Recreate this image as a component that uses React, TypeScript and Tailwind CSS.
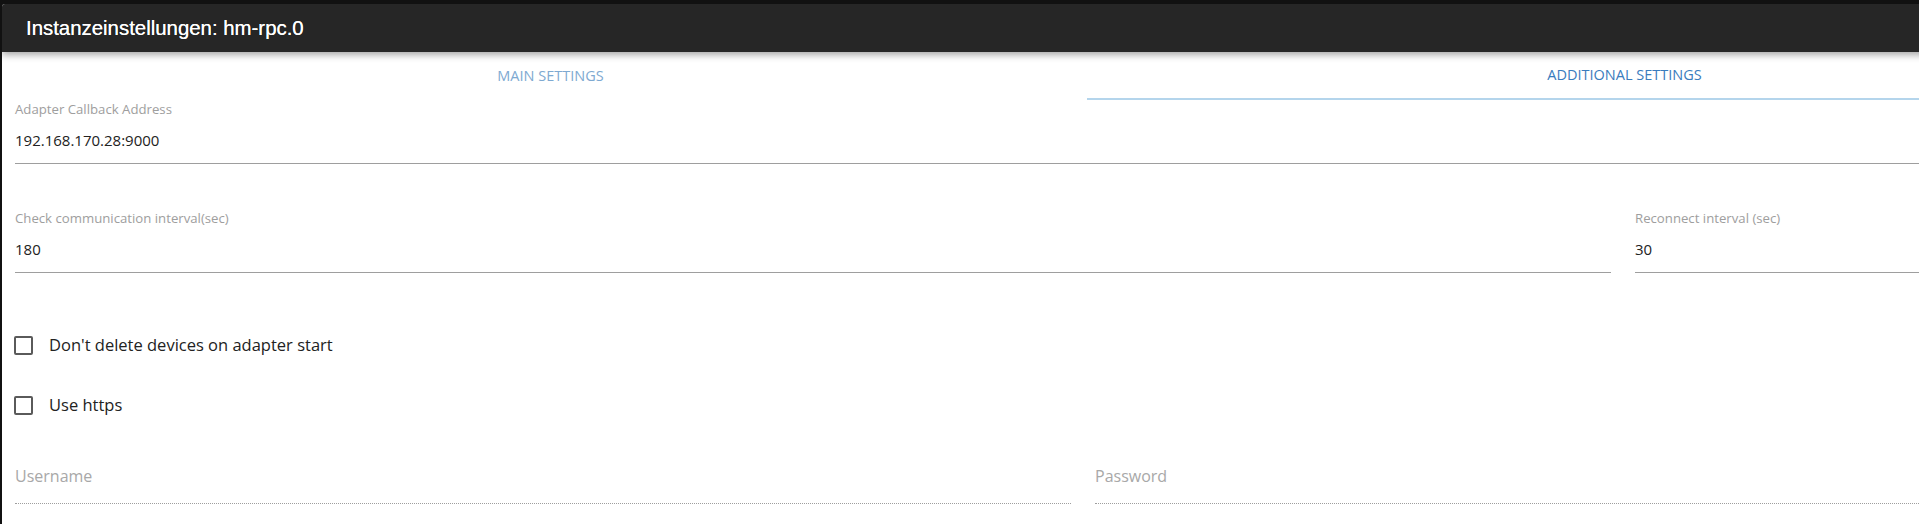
import React from 'react';

const body = { fontFamily: '"Open Sans", "Noto Sans", sans-serif' };

const TextField = ({ label, value }: { label: string; value: string }) => (
  <div className="px-3">
    <div className="h-[17px] text-[13.2px] leading-[17px] text-[#9e9e9e]">{label}</div>
    <div className="h-[46px] flex items-center pb-[1px] border-b border-[#9e9e9e] text-[15px] text-[#222]">{value}</div>
  </div>
);

const Placeholder = ({ text }: { text: string }) => (
  <div className="px-3">
    <div className="h-[46px] flex items-center pb-[9px] border-b border-dotted border-[#9e9e9e] text-[16px] text-[#a8a8a8]">
      {text}
    </div>
  </div>
);

const Checkbox = ({ label, className }: { label: string; className: string }) => (
  <div className={`flex items-center h-[24px] pl-[11px] ${className}`}>
    <span className="w-[19px] h-[19px] border-2 border-[#5a5a5a] rounded-[2px]" />
    <span className="ml-[16px] text-[16.5px] text-[#222]">{label}</span>
  </div>
);

export default function App() {
  return (
    <div className="w-[1919px] h-[524px] overflow-hidden bg-[#111] pt-[4px] pl-[2px]" style={body}>
      <div className="w-[2170px] h-full bg-white rounded-tl-[3px] overflow-hidden">
        {/* Title bar */}
        <div className="relative z-10 h-[48px] bg-[#262626] flex items-center pl-[24px] shadow-[0_3px_7px_rgba(0,0,0,0.35)]">
          <span
            className="text-white text-[20.4px] [text-shadow:0_0_0.6px_#fff]"
            style={{ fontFamily: '"Liberation Sans", Arial, sans-serif' }}
          >
            Instanzeinstellungen: hm-rpc.0
          </span>
        </div>

        {/* Tabs */}
        <div className="flex h-[48px]">
          <div className="w-[1085px] flex items-center justify-center pl-[12px] text-[14.5px] text-[#7ea9d1]">
            MAIN SETTINGS
          </div>
          <div className="w-[1085px] flex items-center justify-center pr-[10px] text-[14.5px] text-[#3a7cbd] border-b-2 border-[#b4d5ec]">
            ADDITIONAL SETTINGS
          </div>
        </div>

        {/* Form */}
        <div className="pl-[1px] w-[2161px]">
          <div className="mt-[1px]">
            <TextField label="Adapter Callback Address" value="192.168.170.28:9000" />
          </div>

          <div className="grid grid-cols-4 mt-[46px]">
            <div className="col-span-3">
              <TextField label="Check communication interval(sec)" value="180" />
            </div>
            <div>
              <TextField label="Reconnect interval (sec)" value="30" />
            </div>
          </div>

          <Checkbox label="Don't delete devices on adapter start" className="mt-[60px]" />
          <Checkbox label="Use https" className="mt-[36px]" />

          <div className="grid grid-cols-2 mt-[41px]">
            <Placeholder text="Username" />
            <Placeholder text="Password" />
          </div>
        </div>
      </div>
    </div>
  );
}
